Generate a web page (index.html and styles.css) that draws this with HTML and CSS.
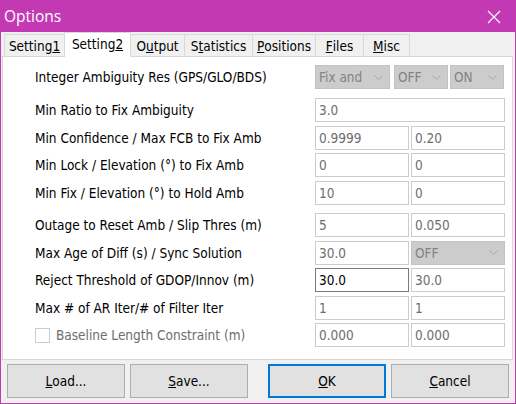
FILE: index.html
```html
<!DOCTYPE html>
<html>
<head>
<meta charset="utf-8">
<title>Options</title>
<link rel="stylesheet" href="styles.css">
</head>
<body>
<div class="window">
  <div class="titlebar">
    <span class="title">Options</span>
    <svg class="close" width="14" height="14" viewBox="0 0 14 14"><path d="M1 1 L13 13 M13 1 L1 13" stroke="#fff" stroke-width="1.1" fill="none"/></svg>
  </div>
  <div class="tabs">
    <div class="tab">Setting<u>1</u></div>
    <div class="tab active">Setting<u>2</u></div>
    <div class="tab">O<u>u</u>tput</div>
    <div class="tab">S<u>t</u>atistics</div>
    <div class="tab"><u>P</u>ositions</div>
    <div class="tab"><u>F</u>iles</div>
    <div class="tab"><u>M</u>isc</div>
  </div>
  <div class="panel">
    <div class="row">
      <div class="label">Integer Ambiguity Res (GPS/GLO/BDS)</div>
      <div class="combos">
        <div class="combo combo-wide"><span>Fix and</span><svg class="chev" width="9" height="5" viewBox="0 0 9 5"><path d="M0.5 0.5 L4.5 4.5 L8.5 0.5" stroke="#a6a6a6" fill="none"/></svg></div>
        <div class="combo combo-mid"><span>OFF</span><svg class="chev" width="9" height="5" viewBox="0 0 9 5"><path d="M0.5 0.5 L4.5 4.5 L8.5 0.5" stroke="#a6a6a6" fill="none"/></svg></div>
        <div class="combo"><span>ON</span><svg class="chev" width="9" height="5" viewBox="0 0 9 5"><path d="M0.5 0.5 L4.5 4.5 L8.5 0.5" stroke="#a6a6a6" fill="none"/></svg></div>
      </div>
    </div>
    <div class="row sep-small">
      <div class="label">Min Ratio to Fix Ambiguity</div>
      <div class="field field-wide">3.0</div>
    </div>
    <div class="row">
      <div class="label">Min Confidence / Max FCB to Fix Amb</div>
      <div class="field">0.9999</div>
      <div class="field">0.20</div>
    </div>
    <div class="row">
      <div class="label">Min Lock / Elevation (°) to Fix Amb</div>
      <div class="field">0</div>
      <div class="field">0</div>
    </div>
    <div class="row">
      <div class="label">Min Fix / Elevation (°) to Hold Amb</div>
      <div class="field">10</div>
      <div class="field">0</div>
    </div>
    <div class="row sep">
      <div class="label">Outage to Reset Amb / Slip Thres (m)</div>
      <div class="field">5</div>
      <div class="field">0.050</div>
    </div>
    <div class="row">
      <div class="label">Max Age of Diff (s) / Sync Solution</div>
      <div class="field">30.0</div>
      <div class="combo combo-field"><span>OFF</span><svg class="chev" width="9" height="5" viewBox="0 0 9 5"><path d="M0.5 0.5 L4.5 4.5 L8.5 0.5" stroke="#a6a6a6" fill="none"/></svg></div>
    </div>
    <div class="row">
      <div class="label">Reject Threshold of GDOP/Innov (m)</div>
      <div class="field field-active">30.0</div>
      <div class="field">30.0</div>
    </div>
    <div class="row">
      <div class="label">Max # of AR Iter/# of Filter Iter</div>
      <div class="field">1</div>
      <div class="field">1</div>
    </div>
    <div class="row">
      <div class="label label-check"><span class="checkbox"></span><span class="check-text">Baseline Length Constraint (m)</span></div>
      <div class="field">0.000</div>
      <div class="field">0.000</div>
    </div>
  </div>
  <div class="buttons">
    <div class="btn-group">
      <div class="btn"><u>L</u>oad...</div>
      <div class="btn"><u>S</u>ave...</div>
    </div>
    <div class="btn-group">
      <div class="btn btn-default"><u>O</u>K</div>
      <div class="btn"><u>C</u>ancel</div>
    </div>
  </div>
</div>
</body>
</html>
```

FILE: styles.css
```css
html, body {
  margin: 0;
  padding: 0;
}

body {
  width: 516px;
  height: 404px;
  overflow: hidden;
  font-family: "DejaVu Sans Condensed", "DejaVu Sans", sans-serif;
  font-stretch: condensed;
  font-size: 13.5px;
  color: #000;
}

.window {
  width: 516px;
  height: 404px;
  box-sizing: border-box;
  border: 1px solid #c239b3;
  border-top: 0;
  background: #f0f0f0;
  display: flex;
  flex-direction: column;
}

.titlebar {
  height: 32px;
  flex: none;
  background: #c239b3;
  display: flex;
  align-items: center;
  justify-content: space-between;
  padding: 0 14px 0 3px;
}

.title {
  font-family: "Open Sans", "Noto Sans", sans-serif;
  font-stretch: normal;
  font-size: 15.5px;
  color: #fff;
  margin-top: -1px;
}

.close {
  display: block;
  margin-top: 1px;
}

.tabs {
  display: flex;
  height: 24px;
  flex: none;
  padding-left: 3px;
  position: relative;
  z-index: 1;
}

.tab {
  box-sizing: border-box;
  height: 22px;
  margin-top: 2px;
  margin-left: -1px;
  border: 1px solid #d9d9d9;
  border-bottom: 0;
  background: #f0f0f0;
  display: flex;
  align-items: center;
  justify-content: center;
  padding-top: 1px;
}

.tab:first-child { margin-left: 0; width: 61px; }
.tab:nth-child(2) { width: 67px; }
.tab:nth-child(3) { width: 55px; }
.tab:nth-child(4) { width: 69px; }
.tab:nth-child(5) { width: 64px; }
.tab:nth-child(6) { width: 49px; }
.tab:nth-child(7) { width: 47px; }

.tab.active {
  height: 25px;
  margin-top: 0;
  background: #fff;
  padding-top: 0;
  padding-bottom: 2px;
}

.panel {
  box-sizing: border-box;
  height: 304px;
  flex: none;
  margin: 0 2px 0 1px;
  border: 1px solid #d9d9d9;
  background: #fff;
  padding: 8px 0 0 32px;
  display: flex;
  flex-direction: column;
}

.row {
  display: flex;
  align-items: center;
  height: 24px;
  margin-top: 3.5px;
}

.row:first-child { margin-top: 0; }
.row.sep-small { margin-top: 9px; }
.row.sep { margin-top: 8.5px; }

.label {
  width: 278px;
  margin-right: 2px;
  white-space: nowrap;
}

.label-check {
  display: flex;
  align-items: center;
}

.checkbox {
  box-sizing: border-box;
  width: 15px;
  height: 15px;
  border: 1px solid #cccccc;
  background: #fff;
  margin-right: 6px;
}

.check-text {
  color: #6d6d6d;
}

.field {
  box-sizing: border-box;
  width: 94px;
  height: 24px;
  border: 1px solid #cccccc;
  background: #fff;
  color: #6d6d6d;
  padding: 0 3px;
  display: flex;
  align-items: center;
}

.field + .field,
.field + .combo {
  margin-left: 2px;
}

.field-wide {
  width: 190px;
}

.field-active {
  border-color: #7a7a7a;
  color: #000;
}

.combos {
  display: flex;
  gap: 2px;
}

.combo {
  box-sizing: border-box;
  width: 54px;
  height: 24px;
  border: 1px solid #c2c2c2;
  background: #cccccc;
  color: #838383;
  padding: 0 6px 0 3px;
  display: flex;
  align-items: center;
  justify-content: space-between;
}

.combo-wide {
  width: 75px;
  margin-right: 2px;
}

.combo-field {
  width: 94px;
}

.chev {
  display: block;
}

.buttons {
  flex: none;
  display: flex;
  justify-content: space-between;
  padding: 4px 6px 0 6px;
}

.btn-group {
  display: flex;
  gap: 5px;
}

.btn {
  box-sizing: border-box;
  width: 118px;
  height: 34px;
  border: 1px solid #adadad;
  background: #e1e1e1;
  display: flex;
  align-items: center;
  justify-content: center;
}

.btn-default {
  border: 2px solid #0078d7;
}
```
